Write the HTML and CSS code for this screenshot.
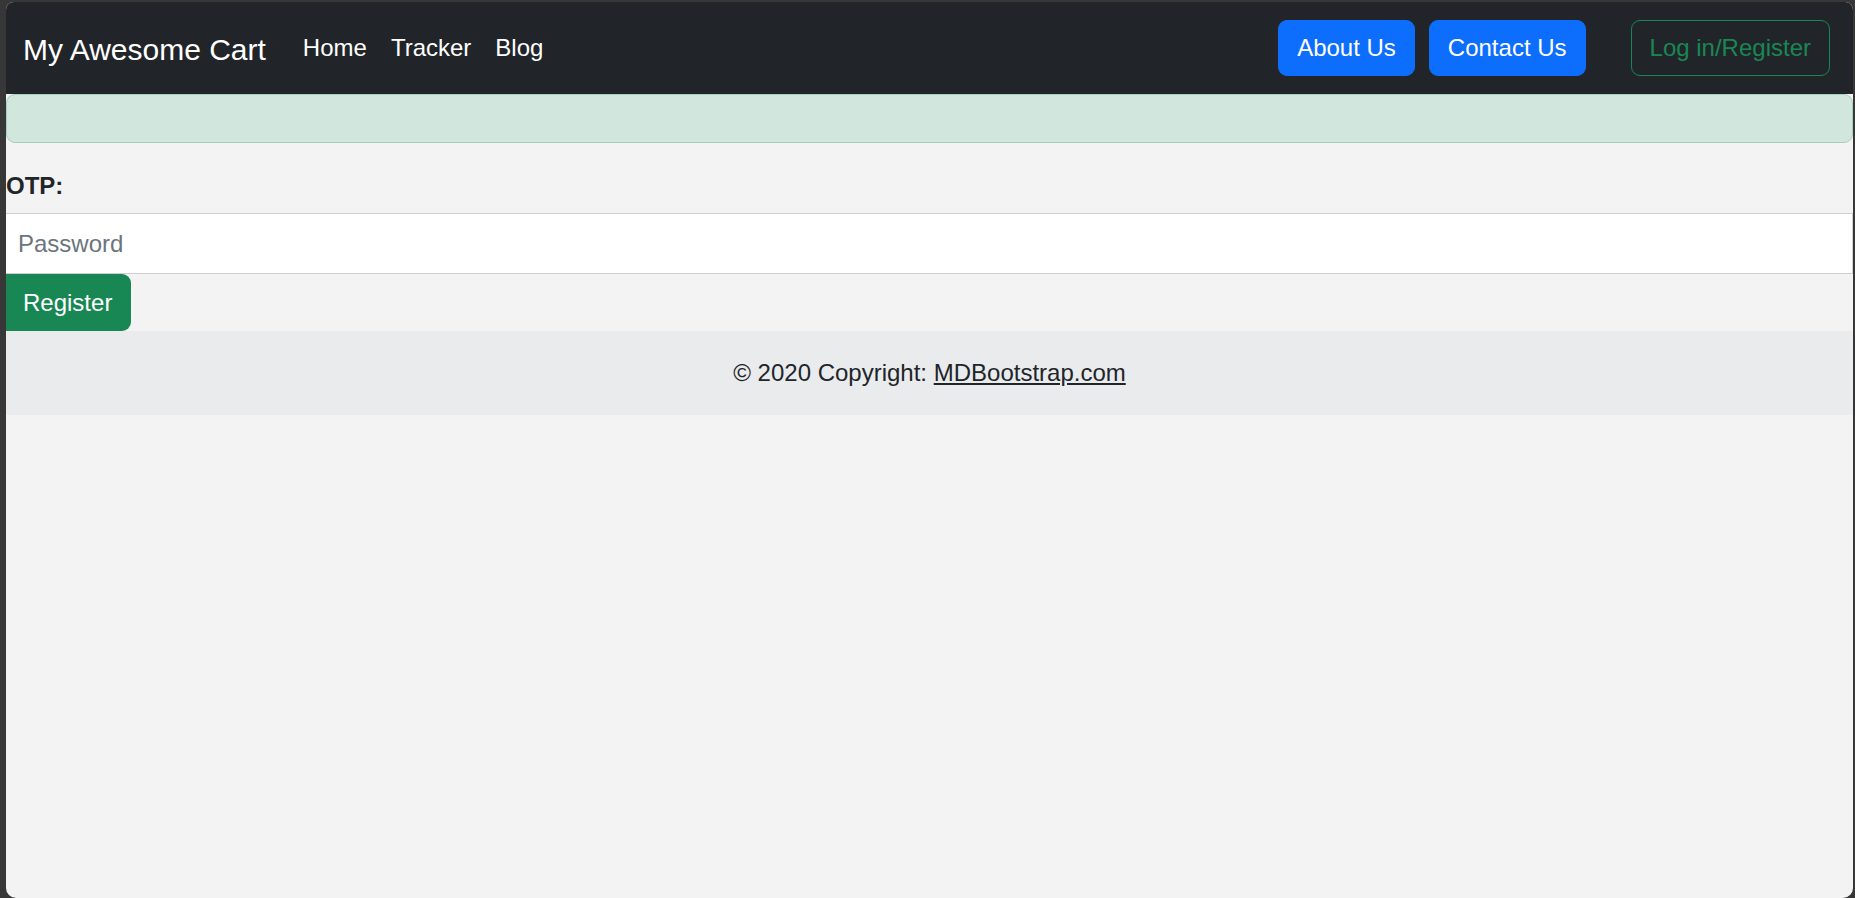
FILE: index.html
```html
<!DOCTYPE html>
<html lang="en">
<head>
<meta charset="utf-8">
<title>My Awesome Cart</title>
<link rel="stylesheet" href="styles.css">
</head>
<body>
<div class="window">
  <nav class="navbar">
    <a class="brand" href="#">My Awesome Cart</a>
    <ul class="nav-links">
      <li><a class="nav-link" href="#">Home</a></li>
      <li><a class="nav-link" href="#">Tracker</a></li>
      <li><a class="nav-link" href="#">Blog</a></li>
    </ul>
    <div class="nav-actions">
      <button class="btn btn-primary" type="button">About Us</button>
      <button class="btn btn-primary" type="button">Contact Us</button>
      <button class="btn btn-outline-success login" type="button">Log in/Register</button>
    </div>
  </nav>
  <div class="alert" role="alert"></div>
  <form class="otp-form">
    <label class="otp-label" for="otp">OTP:</label>
    <input class="form-control" id="otp" type="password" placeholder="Password">
    <button class="btn btn-success register" type="submit">Register</button>
  </form>
  <footer class="footer">
    <span>© 2020 Copyright: <a class="footer-link" href="#">MDBootstrap.com</a></span>
  </footer>
</div>
</body>
</html>
```

FILE: styles.css
```css
* { box-sizing: border-box; }

html, body {
  margin: 0;
  padding: 0;
  height: 100%;
}

body {
  background: #373737;
  font-family: "Liberation Sans", Arial, sans-serif;
  font-size: 24px;
  line-height: 36px;
  color: #212529;
  overflow: hidden;
}

.window {
  margin: 2px 2px 0 6px;
  height: 896px;
  background: #f3f3f3;
  border-radius: 8px 8px 10px 10px;
  overflow: hidden;
}

.navbar {
  display: flex;
  align-items: center;
  height: 92px;
  background: #212529;
  padding: 0 23px 0 17px;
}

.brand {
  font-size: 30px;
  line-height: 45px;
  color: #ffffff;
  text-decoration: none;
  margin-right: 25px;
  padding-top: 2px;
}

.nav-links {
  display: flex;
  list-style: none;
  margin: 0;
  padding: 0;
}

.nav-link {
  display: block;
  padding: 0 12px;
  color: #ffffff;
  text-decoration: none;
  line-height: 36px;
}

.nav-actions {
  margin-left: auto;
  display: flex;
  align-items: center;
  gap: 14px;
}

.btn {
  font-family: inherit;
  font-size: 24px;
  line-height: 36px;
  padding: 9px 18px;
  border: 1px solid transparent;
  border-radius: 9px;
  cursor: pointer;
  margin: 0;
}

.btn-primary {
  background: #0d6efd;
  border-color: #0d6efd;
  color: #ffffff;
}

.btn-outline-success {
  background: transparent;
  border-color: #198754;
  color: #198754;
}

.login {
  margin-left: 31px;
}

.alert {
  height: 49px;
  background: #d1e7dd;
  border: 1px solid #a3cfbb;
  border-radius: 9px;
  margin-bottom: 25px;
}

.otp-form {
  margin: 0;
}

.otp-label {
  display: block;
  font-weight: bold;
  line-height: 36px;
  margin-bottom: 9px;
}

.form-control {
  display: block;
  width: 100%;
  height: 61px;
  margin: 0;
  font-family: inherit;
  font-size: 24px;
  line-height: 36px;
  padding: 11px 12px;
  color: #212529;
  background: #ffffff;
  border: 1px solid #cfcfcf;
  border-left-width: 0;
  border-radius: 0;
  outline: none;
}

.form-control::placeholder {
  color: #6c757d;
  opacity: 1;
}

.register {
  display: block;
  height: 57px;
  padding: 0 19px 0 17px;
  border: none;
  border-radius: 0 9px 9px 0;
  background: #198754;
  color: #ffffff;
}

.footer {
  height: 84px;
  background: #eaebed;
  display: flex;
  align-items: center;
  justify-content: center;
}

.footer-link {
  color: #212529;
  text-decoration: underline;
}
```
